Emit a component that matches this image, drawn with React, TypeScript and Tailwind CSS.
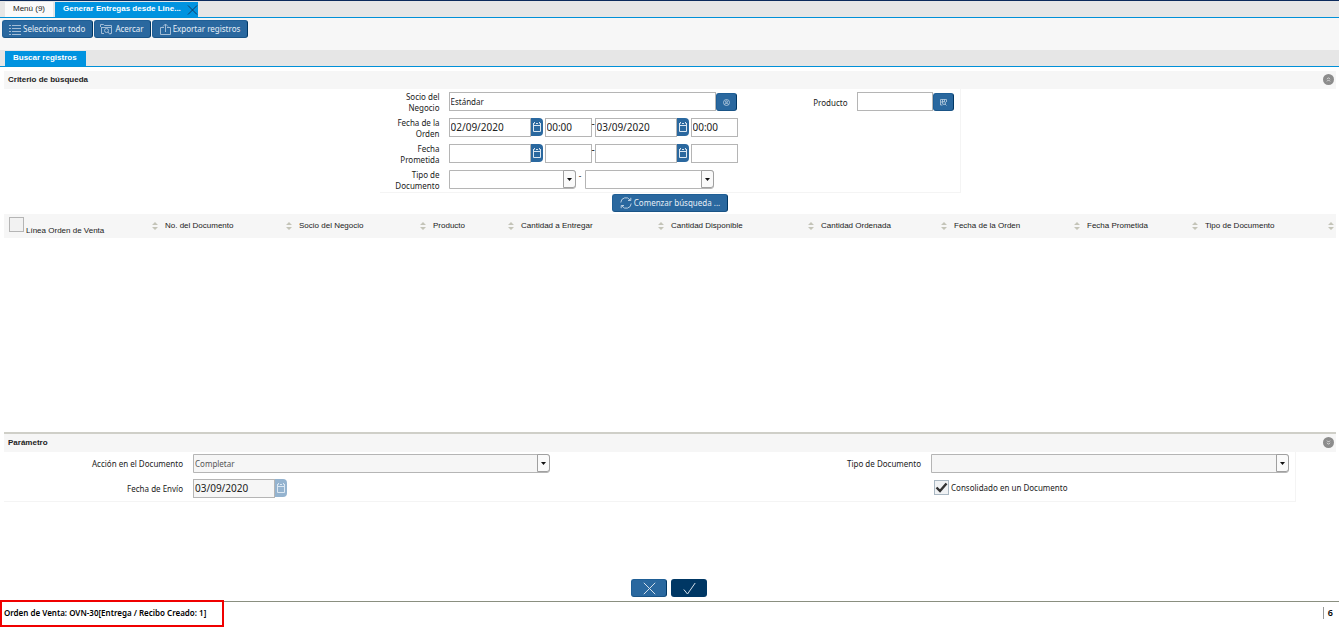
import type { ReactNode } from 'react';
import clsx from 'clsx';

const columns = [
  { label: 'Línea Orden de Venta', width: 'w-[156px]' },
  { label: 'No. del Documento', width: 'w-[134px]' },
  { label: 'Socio del Negocio', width: 'w-[134px]' },
  { label: 'Producto', width: 'w-[88px]' },
  { label: 'Cantidad a Entregar', width: 'w-[150px]' },
  { label: 'Cantidad Disponible', width: 'w-[150px]' },
  { label: 'Cantidad Ordenada', width: 'w-[133px]' },
  { label: 'Fecha de la Orden', width: 'w-[133px]' },
  { label: 'Fecha Prometida', width: 'w-[118px]' },
  { label: 'Tipo de Documento', width: 'w-[136px]' },
];

const sans = "font-['Liberation_Sans',Arial,sans-serif]";
const inputClass = 'h-[19px] min-w-0 border border-[#b5b5b5] px-px pb-px text-[#222] outline-none';
const buttonClass =
  'flex h-[18px] items-center justify-center rounded-[3px] border border-[#1f5f96] border-r-[#003764] border-b-[#1a5486] bg-[#2a689f] text-[#e6eef6]';

function ListIcon() {
  return (
    <svg width="12" height="11" viewBox="0 0 12 11" stroke="#a3bdd6" fill="none" aria-hidden="true">
      <path d="M0 1.5h2M0 4.5h2M0 7.5h2M0 10.5h2M3 1.5h9M3 4.5h9M3 7.5h9M3 10.5h9" />
    </svg>
  );
}

function ZoomIcon() {
  return (
    <svg width="13" height="12" viewBox="0 0 13 12" stroke="#a3bdd6" fill="none" aria-hidden="true">
      <path d="M4 10.500H1.500V4M.5 4V1.500h3l1 1h7V4M1 4.500h11M11.500 4v6.500H10" />
      <circle cx="6.500" cy="7.500" r="2" />
      <path d="M8 9l2 2.500" />
    </svg>
  );
}

function ExportIcon() {
  return (
    <svg width="11" height="12" viewBox="0 0 11 12" stroke="#a3bdd6" fill="none" aria-hidden="true">
      <path d="M4 4.500H.5v7h10v-7H7M5.500 9V1M3 3.500L5.500 1 8 3.500" />
    </svg>
  );
}

function RefreshIcon() {
  return (
    <svg width="12" height="12" viewBox="0 0 12 12" stroke="#c9d9e8" strokeWidth="0.9" fill="none" aria-hidden="true">
      <path d="M.8 5.500A5 5 0 0 1 10 3M10.800.8v2.700H8M11.200 6.500A5 5 0 0 1 2 9M1.200 11.200V8.500H4" />
    </svg>
  );
}

function CalendarButton({ label, disabled }: { label: string; disabled?: boolean }) {
  return (
    <button
      type="button"
      aria-label={label}
      disabled={disabled}
      className={clsx(
        'flex h-[18px] w-3 shrink-0 items-center justify-center rounded-r-sm',
        disabled ? 'bg-[#94b3cf]' : 'bg-[#2a689f]',
      )}
    >
      <svg width="10" height="12" viewBox="0 0 10 12" stroke="#dbe7f2" fill="none" aria-hidden="true">
        <path d="M1.500 4v6.500h7V4M1 4.500h8M1.500 4.500V2.500M8.500 4.500V2.500M1 2.500h1.500M4 2.500h2M7.500 2.500H9M2.500 1v1M7.500 1v1" />
      </svg>
    </button>
  );
}

function LookupButton({ label, children }: { label: string; children: ReactNode }) {
  return (
    <button type="button" aria-label={label} className={clsx(buttonClass, 'mt-px mr-px w-[21px] shrink-0')}>
      <svg width="7" height="7" viewBox="0 0 7 7" stroke="#bdd0e2" strokeWidth="0.8" fill="none" aria-hidden="true">
        {children}
      </svg>
    </button>
  );
}

function DropDown({ id, label, value, className }: { id: string; label?: string; value?: string; className?: string }) {
  return (
    <div className={clsx('relative', className)}>
      <select
        id={id}
        aria-label={label}
        defaultValue={value ?? ''}
        className={clsx(
          'block h-[19px] w-full appearance-none rounded-r-[3px] border border-[#b5b5b5] px-px text-[8px] text-[#555] outline-none',
          value === undefined ? 'bg-white' : 'bg-[#f6f6f6]',
        )}
      >
        <option value={value ?? ''}>{value ?? ''}</option>
      </select>
      <span className="pointer-events-none absolute top-0 right-0 flex h-[18px] w-[13px] items-center justify-center rounded-r-[3px] border border-[#a0a0a0] bg-[#fafafa]">
        <svg width="5" height="3" viewBox="0 0 5 3" aria-hidden="true">
          <path d="M0 0h5L2.500 3z" fill="#111" />
        </svg>
      </span>
    </div>
  );
}

function FieldLabel({ htmlFor, children }: { htmlFor: string; children: ReactNode }) {
  return (
    <label htmlFor={htmlFor} className="self-center text-right leading-[11px]">
      {children}
    </label>
  );
}

function DateRange({ id, name, from, to, time }: { id: string; name: string; from?: string; to?: string; time?: string }) {
  return (
    <div className="mt-px flex items-start text-[10px]">
      <input id={id} defaultValue={from} className={clsx(inputClass, 'w-[82px] bg-white')} />
      <CalendarButton label={`${name} desde`} />
      <input aria-label={`${name} hora desde`} defaultValue={time} className={clsx(inputClass, 'ml-0.5 w-[47px] bg-white')} />
      <span className="w-[3px] leading-[11px]">-</span>
      <input aria-label={`${name} hasta`} defaultValue={to} className={clsx(inputClass, 'w-[82px] bg-white')} />
      <CalendarButton label={`${name} hasta`} />
      <input aria-label={`${name} hora hasta`} defaultValue={time} className={clsx(inputClass, 'ml-0.5 w-[47px] bg-white')} />
    </div>
  );
}

function SectionHeader({ title, open }: { title: string; open: boolean }) {
  return (
    <div className="flex h-[18px] items-center justify-between bg-[#f6f6f6] pr-0.5 pb-px pl-1">
      <h2 className={clsx(sans, 'font-bold')}>{title}</h2>
      <button
        type="button"
        aria-label={title}
        aria-expanded={open}
        className="flex size-[11px] items-center justify-center rounded-full bg-[#8c8c8c]"
      >
        <svg width="5" height="5" viewBox="0 0 5 5" stroke="#fff" strokeWidth="0.7" fill="none" aria-hidden="true">
          <path d={open ? 'M1 2.200L2.500.7 4 2.200M1 4.400l1.500-1.500L4 4.400' : 'M1 .6l1.500 1.500L4 .6M1 2.800l1.500 1.500L4 2.800'} />
        </svg>
      </button>
    </div>
  );
}

function SortIcon() {
  return (
    <svg width="6" height="8" viewBox="0 0 6 8" fill="#c4c4b8" className="shrink-0" aria-hidden="true">
      <path d="M0 3l3-3 3 3zM0 5h6L3 8z" />
    </svg>
  );
}

function SearchForm() {
  return (
    <form className="mx-auto grid w-[581px] grid-cols-[60px_289px_1fr_98px] items-start gap-x-[9px] gap-y-1 border-r border-b border-[#f4f4f4] pt-0.5 pr-[5px] pb-px">
      <FieldLabel htmlFor="socio">Socio del Negocio</FieldLabel>
      <div className="mt-px flex items-start">
        <input id="socio" defaultValue="Estándar" className={clsx(inputClass, 'flex-1 bg-white')} />
        <LookupButton label="Buscar socio">
          <circle cx="3.500" cy="3.500" r="3" />
          <circle cx="3.500" cy="2.800" r="1" />
          <path d="M1.500 5.500c.5-1.500 3.500-1.500 4 0" />
        </LookupButton>
      </div>
      <FieldLabel htmlFor="producto">Producto</FieldLabel>
      <div className="mt-px flex items-start">
        <input id="producto" className={clsx(inputClass, 'flex-1 bg-white')} />
        <LookupButton label="Buscar producto">
          <path d="M.5.500h6M.5.500v5.500h2M6.500.500V3M2.500.500V3M4.500.500v2M1 3h2" />
          <circle cx="4" cy="4" r="1.500" />
          <path d="M5 5l1.500 1.500" />
        </LookupButton>
      </div>

      <FieldLabel htmlFor="orden">Fecha de la Orden</FieldLabel>
      <DateRange id="orden" name="Fecha de la Orden" from="02/09/2020" to="03/09/2020" time="00:00" />
      <span className="col-span-2" />

      <FieldLabel htmlFor="prometida">Fecha Prometida</FieldLabel>
      <DateRange id="prometida" name="Fecha Prometida" />
      <span className="col-span-2" />

      <FieldLabel htmlFor="tipo-desde">Tipo de Documento</FieldLabel>
      <div className="mt-px flex items-start">
        <DropDown id="tipo-desde" className="w-[127px]" />
        <span className="w-[9px] text-center leading-[11px]">-</span>
        <DropDown id="tipo-hasta" label="Tipo de Documento hasta" className="w-[129px]" />
      </div>
    </form>
  );
}

function ParameterForm() {
  return (
    <form className="grid w-[97%] grid-cols-[179fr_357fr_361fr_358fr] items-center gap-x-2.5 gap-y-1.5 border-r border-b border-[#f4f4f4] pt-0.5 pr-1.5 pb-[3px]">
      <FieldLabel htmlFor="accion">Acción en el Documento</FieldLabel>
      <DropDown id="accion" value="Completar" />
      <FieldLabel htmlFor="tipo">Tipo de Documento</FieldLabel>
      <DropDown id="tipo" value="" />
      <FieldLabel htmlFor="envio">Fecha de Envío</FieldLabel>
      <div className="flex items-start text-[10px]">
        <input id="envio" defaultValue="03/09/2020" readOnly className={clsx(inputClass, 'w-[82px] bg-[#f6f6f6]')} />
        <CalendarButton label="Fecha de Envío" disabled />
      </div>
      <label className="col-start-4 ml-[3px] flex items-center gap-0.5 pb-0.5">
        <span className="relative size-[15px]">
          <input type="checkbox" defaultChecked className="block size-[15px] appearance-none border border-[#a9b7c2] bg-[#f0f2f4]" />
          <svg width="13" height="11" viewBox="0 0 13 11" className="pointer-events-none absolute top-0.5 left-px" aria-hidden="true">
            <path d="M1.500 5.500l3.500 3.500L11.500 1.500" stroke="#333" strokeWidth="2.400" fill="none" />
          </svg>
        </span>
        Consolidado en un Documento
      </label>
    </form>
  );
}

export default function App() {
  return (
    <div className="flex min-h-screen flex-col bg-white font-['Noto_Sans',sans-serif] text-[8px] leading-[12px] text-[#222]">
      <nav className={clsx(sans, 'flex h-[18px] items-stretch border-t border-b border-t-[#0b2a5c] border-b-[#0090d8] bg-[#e6e6e6] pt-px')}>
        <button type="button" className="ml-[5px] w-[48px] bg-[#fafafa] pb-0.5">Menú (9)</button>
        <div className="ml-0.5 flex items-center bg-[#0093e0] pl-2">
          <button type="button" className="pb-0.5 font-bold text-white">Generar Entregas desde Line...</button>
          <button type="button" aria-label="Cerrar" className="ml-1.5">
            <svg width="11" height="11" viewBox="0 0 11 11" stroke="#123b60" fill="none" aria-hidden="true">
              <path d="M1 1.500l9 9M10 1.500l-9 9" />
            </svg>
          </button>
        </div>
      </nav>

      <div className="flex h-8 items-start gap-px bg-[#f7f7f7] pt-0.5 pl-0.5">
        <button type="button" className={clsx(buttonClass, 'gap-0.5 pr-[7px] pl-1.5')}><ListIcon />Seleccionar todo</button>
        <button type="button" className={clsx(buttonClass, 'gap-0.5 pr-1.5 pl-[5px]')}><ZoomIcon />Acercar</button>
        <button type="button" className={clsx(buttonClass, 'gap-0.5 px-[7px]')}><ExportIcon />Exportar registros</button>
      </div>

      <div className={clsx(sans, 'flex h-[17px] items-stretch border-b border-[#0090d8] bg-[#e6e6e6] pt-px pl-[5px]')}>
        <button type="button" className="bg-[#0093e0] pr-[9px] pb-px pl-2 font-bold text-white">Buscar registros</button>
      </div>

      <main className="flex flex-1 flex-col pt-1 pr-[3px] pl-1">
        <SectionHeader title="Criterio de búsqueda" open />
        <SearchForm />
        <button type="button" className={clsx(buttonClass, 'mx-auto mt-px gap-0.5 px-[7px]')}>
          <RefreshIcon />
          Comenzar búsqueda ...
        </button>

        <table className={clsx(sans, 'mt-0.5 w-full table-fixed text-left')}>
          <thead>
            <tr className="h-6 bg-[#f6f6f6]">
              {columns.map((column, i) => (
                <th key={column.label} className={clsx(column.width, 'p-0 font-normal')}>
                  <div className="flex h-6 items-center justify-between pr-0.5 pb-px pl-[5px]">
                    {i === 0 ? (
                      <span className="flex items-start gap-0.5 self-start pt-[3px]">
                        <input
                          type="checkbox"
                          aria-label="Seleccionar todo"
                          className="size-[15px] appearance-none border border-[#b5b5b5] bg-[#f2f2f2]"
                        />
                        <span className="pt-2">{column.label}</span>
                      </span>
                    ) : (
                      <span className="whitespace-nowrap">{column.label}</span>
                    )}
                    <SortIcon />
                  </div>
                </th>
              ))}
            </tr>
          </thead>
        </table>

        <section className="mt-auto border-t-2 border-[#cfcfc8]">
          <SectionHeader title="Parámetro" open={false} />
          <ParameterForm />
        </section>

        <div className="mt-[77px] flex justify-center gap-1 pr-0.5 pb-1">
          <button type="button" aria-label="Cancelar" className={clsx(buttonClass, 'w-9')}>
            <svg width="13" height="13" viewBox="0 0 13 13" stroke="#d5e1ec" fill="none" aria-hidden="true">
              <path d="M.8.8l11.400 11.400M12.200.8L.8 12.200" />
            </svg>
          </button>
          <button type="button" aria-label="Aceptar" className="flex h-[18px] w-9 items-center justify-center rounded-[3px] bg-[#003764]">
            <svg width="13" height="13" viewBox="0 0 13 13" stroke="#d5e1ec" fill="none" aria-hidden="true">
              <path d="M.8 7.500l3.700 4.500L12.200 1" />
            </svg>
          </button>
        </div>
      </main>

      <footer className="relative ml-1 flex h-[26px] items-center justify-between border-t border-[#8a8f80] pb-1 font-semibold text-black">
        <span>Orden de Venta: OVN-30[Entrega / Recibo Creado: 1]</span>
        <span className="mr-0.5 border-l border-[#999] px-1 text-[9px]">6</span>
        <div className="pointer-events-none absolute -top-0.5 bottom-0 -left-1 w-[224px] border-2 border-[#f00000]" />
      </footer>
    </div>
  );
}
